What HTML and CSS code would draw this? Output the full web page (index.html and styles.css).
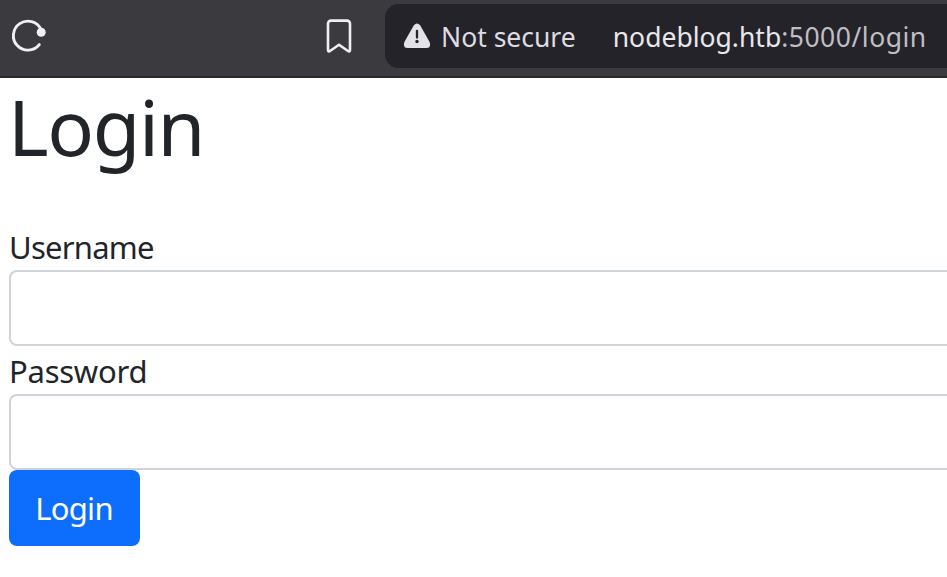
FILE: index.html
```html
<!DOCTYPE html>
<html lang="en">
<head>
<meta charset="utf-8">
<title>Login</title>
<link rel="stylesheet" href="styles.css">
</head>
<body>
<header class="toolbar">
<svg class="reload" width="38" height="38" viewBox="0 0 38 38" fill="none" stroke="#f0f0f2" stroke-width="2.9"><path d="M31 12.5A14.5 14.5 0 1 0 29.3 27.6" stroke-linecap="round"/><circle cx="31.2" cy="15.3" r="4.5" fill="#f0f0f2" stroke="none"/></svg>
<svg class="bookmark" width="26" height="34" viewBox="0 0 26 34" fill="none" stroke="#f0f0f2" stroke-width="2.6" stroke-linejoin="round"><path d="M5 1.6h16a3 3 0 0 1 3 3V31Q24 33 22 32L13 25.7L4 32Q2 33 2 31V4.6a3 3 0 0 1 3-3z"/></svg>
<div class="address">
<svg class="warning" width="28" height="26" viewBox="0 0 28 26"><path d="M10.7 2.6Q14-1.4 17.3 2.6L26.6 19Q28.3 24.8 23.5 25H4.5Q-.3 24.8 1.4 19Z" fill="#e3e2e8"/><path d="M14 8v6.5" stroke="#242329" stroke-width="2.3" stroke-linecap="round"/><circle cx="14" cy="18.5" r="1.7" fill="#242329"/></svg>
<span class="status">Not secure</span>
<span class="url"><span class="host">nodeblog.htb</span><span class="path">:5000/login</span></span>
</div>
</header>
<main class="page">
<h1 class="title">Login</h1>
<form class="form">
<label class="label label-username" for="username">Username</label>
<input class="input" id="username" type="text">
<label class="label label-password" for="password">Password</label>
<input class="input" id="password" type="password">
<button class="submit" type="submit">Login</button>
</form>
</main>
</body>
</html>
```
FILE: styles.css
```css
* { box-sizing: border-box; }
body { margin: 0; background: #fff; color: #212529; font-family: "Noto Sans", sans-serif; }
.toolbar { height: 78px; background: #3b3a3f; border-bottom: 2px solid #29282e; display: flex; align-items: flex-start; }
.reload { margin: 17px 0 0 10px; }
.bookmark { margin: 19px 0 0 278px; }
.address { flex: 1; min-width: 0; height: 64px; margin: 4px 0 0 33px; border-radius: 14px 0 0 14px; background: #242329; display: flex; align-items: center; padding-left: 18px; font-size: 26.5px; color: #dddce2; white-space: nowrap; }
.status { margin-left: 10px; padding-top: 2px; }
.url { margin-left: 37px; padding-top: 2px; color: #e8e8ec; }
.path { color: #bebec3; letter-spacing: 0.5px; }
.page { padding-left: 9px; }
.title { margin: 0; height: 150px; line-height: 97px; font-size: 77.5px; font-weight: 400; letter-spacing: -1.4px; text-indent: -1px; }
.form { display: flex; flex-direction: column; align-items: flex-start; }
.label { height: 42px; line-height: 39px; font-size: 31px; }
.label-username { letter-spacing: -0.75px; }
.label-password { letter-spacing: -0.25px; }
.input { width: 100%; height: 76px; border: 2px solid #ced4da; border-right: 0; border-radius: 8px 0 0 8px; padding: 12px 24px; font: 32px "Noto Sans", sans-serif; margin: 0 0 6px; }
.submit { width: 131px; height: 76px; margin-top: -6px; border: 0; border-radius: 8px; background: #0d6efd; color: #fff; font: 31px "Noto Sans", sans-serif; letter-spacing: -0.7px; padding: 0 1px 0 0; }
```
